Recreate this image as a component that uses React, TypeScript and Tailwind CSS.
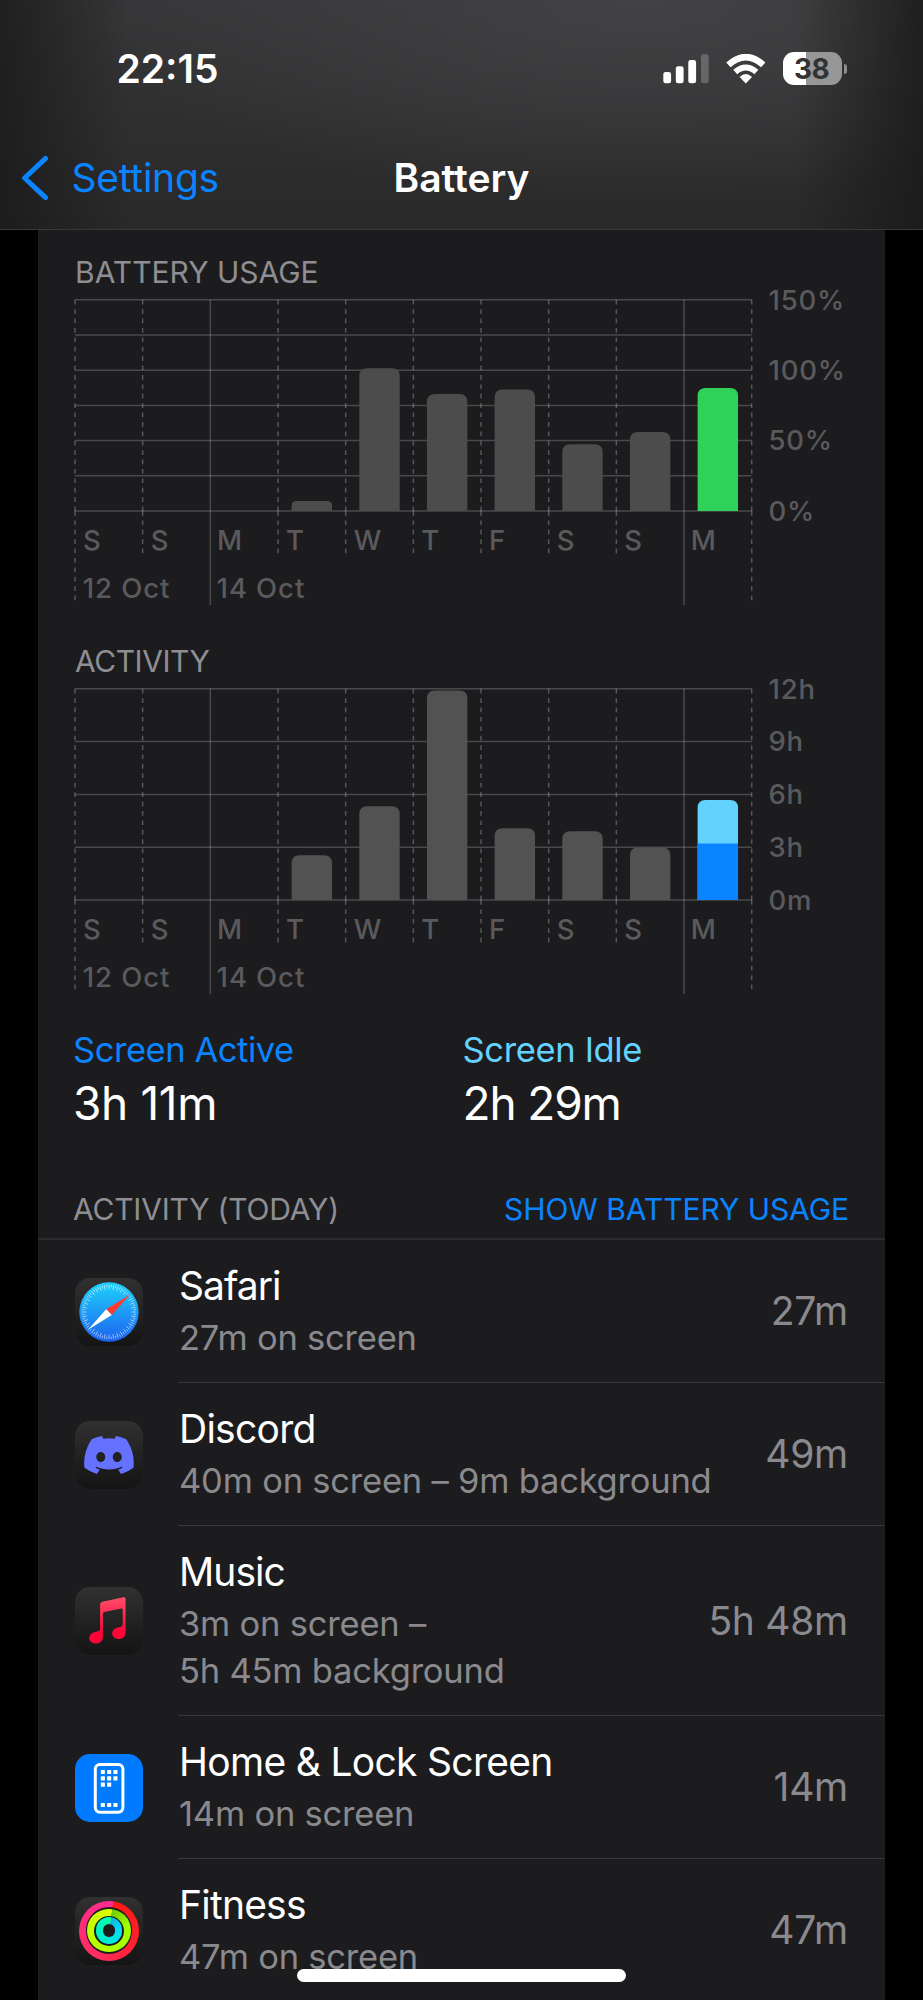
import type { ReactNode } from "react";
import { FaDiscord } from "react-icons/fa";

type Bar = { column: number; height: number; split?: number; fill: string };

type ChartProps = {
  rows: number;
  labels: string[];
  bars: Bar[];
  className: string;
};

type AppUsage = {
  name: string;
  nameClass: string;
  lines: string[];
  total: string;
  icon: ReactNode;
};

const DAYS = ["S", "S", "M", "T", "W", "T", "F", "S", "S", "M"];

const LEFT = 37;
const TOP = 7.8;
const COL = 67.67;
const PLOT_W = COL * 10;
const PLOT_H = 211.2;

const batteryBars: Bar[] = [
  { column: 3, height: 10, fill: "#4c4c4c" },
  { column: 4, height: 142.8, fill: "#4c4c4c" },
  { column: 5, height: 117, fill: "#4c4c4c" },
  { column: 6, height: 121.5, fill: "#4c4c4c" },
  { column: 7, height: 66.8, fill: "#4c4c4c" },
  { column: 8, height: 79, fill: "#4c4c4c" },
  { column: 9, height: 123, fill: "#30d158" },
];

const activityBars: Bar[] = [
  { column: 3, height: 44.7, fill: "#525252" },
  { column: 4, height: 93.7, fill: "#525252" },
  { column: 5, height: 209.5, fill: "#525252" },
  { column: 6, height: 71.7, fill: "#525252" },
  { column: 7, height: 68.7, fill: "#525252" },
  { column: 8, height: 52.5, fill: "#525252" },
  { column: 9, height: 100, split: 56.5, fill: "#64d2ff" },
];

function barPath(x: number, height: number) {
  const w = 40.4;
  const bottom = TOP + PLOT_H;
  const y = bottom - height;
  const r = Math.min(8, height / 2);
  return `M${x} ${bottom}V${y + r}Q${x} ${y} ${x + r} ${y}H${x + w - r}Q${x + w} ${y} ${x + w} ${y + r}V${bottom}Z`;
}

function Chart({ rows, labels, bars, className }: ChartProps) {
  const labelStep = PLOT_H / (labels.length - 1);
  const bottom = TOP + PLOT_H;

  return (
    <svg
      width="847"
      className={`block overflow-visible text-[27.5px] font-medium ${className}`}
      fill="#5a5a5d"
    >
      {Array.from({ length: rows + 1 }, (_, i) => {
        const y = TOP + (PLOT_H / rows) * i;
        return (
          <line key={i} x1={LEFT} x2={LEFT + PLOT_W} y1={y} y2={y} stroke="#fff" strokeOpacity="0.2" strokeWidth="1.5" />
        );
      })}
      {Array.from({ length: 11 }, (_, i) => {
        const x = LEFT + COL * i;
        const solid = i === 2 || i === 9;
        const end = solid ? 313 : i === 0 || i === 10 ? 309 : 262;
        // the dash pattern restarts at the baseline
        return (
          <path
            key={i}
            d={solid ? `M${x} ${TOP}V${end}` : `M${x} ${TOP}V${bottom}M${x} ${bottom}V${end}`}
            fill="none"
            stroke="#fff"
            strokeOpacity={solid ? 0.2 : 0.26}
            strokeWidth="1.5"
            strokeDasharray={solid ? undefined : "4.7 4.7"}
          />
        );
      })}
      {bars.map((bar) => {
        const x = LEFT + COL * bar.column + 13.6;
        return (
          <g key={bar.column}>
            <path d={barPath(x, bar.height)} fill={bar.fill} />
            {bar.split && (
              <rect x={x} y={bottom - bar.split} width="40.4" height={bar.split} fill="#0a84ff" />
            )}
          </g>
        );
      })}
      {DAYS.map((day, i) => (
        <text key={i} x={LEFT + COL * i + (day === "M" ? 6.6 : 8)} y="258">
          {day}
        </text>
      ))}
      <text x="44.8" y="305.8" className="tracking-[0.033em]">12 Oct</text>
      <text x="178.6" y="305.8" className="tracking-[0.033em]">14 Oct</text>
      {labels.map((label, i) => (
        <text key={label} x="730.4" y={TOP + labelStep * i + 9.8} className="tracking-[0.03em]">
          {label}
        </text>
      ))}
    </svg>
  );
}

function DarkTile({ children }: { children: ReactNode }) {
  return (
    <div className="flex size-[68px] items-center justify-center rounded-[15px] bg-linear-to-b from-[#313131] to-[#141414]">
      {children}
    </div>
  );
}

function SafariIcon() {
  return (
    <DarkTile>
      <svg viewBox="0 0 60 60" className="size-[60px]">
        <defs>
          <linearGradient id="safari" x1="0" y1="0" x2="0" y2="1">
            <stop offset="0" stopColor="#1fd2fb" />
            <stop offset="1" stopColor="#1c62f0" />
          </linearGradient>
        </defs>
        <circle cx="30" cy="30" r="29.7" fill="url(#safari)" />
        {Array.from({ length: 72 }, (_, i) => (
          <line
            key={i}
            x1="30"
            x2="30"
            y1="2.8"
            y2={i % 2 ? 5.4 : 7.6}
            stroke="#fff"
            strokeOpacity="0.75"
            strokeWidth="0.7"
            transform={`rotate(${i * 5} 30 30)`}
          />
        ))}
        <path d="M51 12.5L27.2 27.2L32.8 33Z" fill="#ff3b30" />
        <path d="M9 47.7L27.2 27.2L32.8 33Z" fill="#fff" />
      </svg>
    </DarkTile>
  );
}

function MusicIcon() {
  return (
    <DarkTile>
      <svg viewBox="0 0 68 68" className="size-[68px]">
        <defs>
          <linearGradient id="music" x1="0" y1="0" x2="0" y2="1">
            <stop offset="0" stopColor="#ff4e6b" />
            <stop offset="0.75" stopColor="#ff0436" />
          </linearGradient>
        </defs>
        <path
          d="M27.5 14.7L48.5 10.2Q50.6 9.8 50.6 11.8V45.2C50.6 49.5 47.6 52 43.4 52C39.6 52 37.2 49.7 37.2 46.6C37.2 43.2 39.7 41.1 43.2 40.4L46 39.8Q47.7 39.3 47.7 37.5V22.8Q47.7 21.2 46 21.5L29.4 25Q27.9 25.4 27.9 27V49.5C27.9 53.9 24.9 56.5 20.6 56.5C16.8 56.5 14.3 54.2 14.3 51.1C14.3 47.8 16.8 45.6 20.3 44.9L23.3 44.3Q25.1 43.8 25.1 42V17.5Q25.1 15.2 27.5 14.7Z"
          fill="url(#music)"
        />
      </svg>
    </DarkTile>
  );
}

function HomeIcon() {
  const dots = [
    [0, 0], [1, 0], [2, 0],
    [0, 1], [1, 1], [2, 1],
    [0, 2], [1, 2],
  ];

  return (
    <div className="size-[68px] rounded-[15px] bg-[#007aff]">
      <svg viewBox="0 0 68 68" className="size-[68px]" fill="#fff">
        <rect x="20.3" y="10.4" width="27.6" height="47.8" rx="4.6" fill="none" stroke="#fff" strokeWidth="3" />
        {dots.map(([x, y]) => (
          <rect key={`${x}-${y}`} x={25.8 + x * 6.3} y={16 + y * 6.3} width="4.1" height="4.1" rx="0.5" />
        ))}
        {[0, 1, 2].map((x) => (
          <rect key={x} x={25.8 + x * 6.3} y="49" width="4.1" height="4.1" rx="0.5" />
        ))}
      </svg>
    </div>
  );
}

function FitnessIcon() {
  return (
    <DarkTile>
      <div className="relative size-[60px] rounded-full bg-[conic-gradient(from_8deg,#ff1a12,#ff2030_30%,#ff2d60_55%,#ff2c95)]">
        <div className="absolute inset-[6.7px] rounded-full bg-[#1c1c1c]" />
        <div className="absolute inset-[8.3px] rounded-full bg-[conic-gradient(from_8deg,#6fca00,#a0ff00_18%,#b4ff00_55%,#dcff00)]" />
        <div className="absolute inset-[15px] rounded-full bg-[#1c1c1c]" />
        <div className="absolute inset-[16.6px] rounded-full bg-[conic-gradient(from_10deg,#0bb4d8,#00dcfa_20%,#00eed0_55%,#00ffa6)]" />
        <div className="absolute inset-[23.6px] rounded-full bg-[#1c1c1c]" />
      </div>
    </DarkTile>
  );
}

const apps: AppUsage[] = [
  {
    name: "Safari",
    nameClass: "tracking-[-0.025em]",
    lines: ["27m on screen"],
    total: "27m",
    icon: <SafariIcon />,
  },
  {
    name: "Discord",
    nameClass: "tracking-[-0.019em]",
    lines: ["40m on screen – 9m background"],
    total: "49m",
    icon: (
      <DarkTile>
        <FaDiscord className="size-[54px] text-[#6571ff]" />
      </DarkTile>
    ),
  },
  {
    name: "Music",
    nameClass: "tracking-[-0.024em]",
    lines: ["3m on screen –", "5h 45m background"],
    total: "5h 48m",
    icon: <MusicIcon />,
  },
  {
    name: "Home & Lock Screen",
    nameClass: "tracking-[-0.018em]",
    lines: ["14m on screen"],
    total: "14m",
    icon: <HomeIcon />,
  },
  {
    name: "Fitness",
    nameClass: "tracking-[-0.02em]",
    lines: ["47m on screen"],
    total: "47m",
    icon: <FitnessIcon />,
  },
];

function AppRow({ app }: { app: AppUsage }) {
  return (
    <li className="flex items-center pl-[37px]">
      <div className="mr-[35px] shrink-0">{app.icon}</div>
      <div className="flex flex-1 items-center justify-between border-b border-[#38383a] pt-[21.5px] pr-[37px] pb-[21.5px] pl-px">
        <div>
          <h3 className={`text-[39px] leading-[48px] text-white ${app.nameClass}`}>{app.name}</h3>
          <div className="mt-1 text-[34.5px] leading-[47px] tracking-[-0.006em] text-[#8a8a8e]">
            {app.lines.map((line) => (
              <p key={line} className="whitespace-nowrap">
                {line}
              </p>
            ))}
          </div>
        </div>
        <span className="text-[39px] leading-[48px] tracking-[-0.007em] whitespace-nowrap text-[#8a8a8e]">
          {app.total}
        </span>
      </div>
    </li>
  );
}

function StatusBar() {
  return (
    <div className="flex h-[137px] items-center justify-between pr-[76px] pl-[116.5px]">
      <time className="text-[39px] leading-none font-semibold text-white">22:15</time>
      <div className="flex items-center">
        <svg width="47" height="30" viewBox="0 0 47 30" fill="#fff">
          <rect x="0.3" y="18" width="7.8" height="11.3" rx="2.4" />
          <rect x="12.8" y="12.2" width="7.8" height="17.1" rx="2.4" />
          <rect x="25.3" y="6" width="7.8" height="23.3" rx="2.4" />
          <rect x="37.9" y="0.2" width="7.8" height="29.1" rx="2.4" fillOpacity="0.22" />
        </svg>
        <svg width="40" height="30" viewBox="0 0 40 30" className="ml-4" fill="none" stroke="#fff">
          <path d="M2.4 10.8Q19.8 -4.6 37.2 10.8" strokeWidth="6.4" />
          <path d="M9.2 18.1Q19.8 8.9 30.4 18.1" strokeWidth="6" />
          <path d="M13.6 22.9Q19.8 17.3 26 22.9L19.8 29.5Z" fill="#fff" stroke="none" />
        </svg>
        <div className="ml-[17px] flex h-[33px] w-[59px] items-center justify-center rounded-[11px] bg-linear-to-r from-white from-39% to-[#979797] to-39%">
          <span className="mr-[2px] text-[28px] leading-none font-bold tracking-[-0.02em] text-[#333334]">38</span>
        </div>
        <div className="ml-[2px] h-[10px] w-[3px] rounded-r-full bg-[#8e8e8e]" />
      </div>
    </div>
  );
}

export default function App() {
  return (
    <div className="relative h-[2000px] w-[923px] overflow-hidden bg-black font-['Inter',sans-serif] antialiased">
      <header className="h-[230px] border-b border-[#38393b] bg-[linear-gradient(to_right,rgba(24,24,24,0.75),transparent_14%,transparent_86%,rgba(24,24,24,0.8)),radial-gradient(ellipse_560px_200px_at_640px_0px,#424244,transparent),linear-gradient(to_bottom,#363638,#29292a)]">
        <StatusBar />
        <nav className="grid h-[81px] grid-cols-3 items-center">
          <button className="flex items-center pl-[21px] text-left text-[39px] leading-none tracking-[-0.006em] text-[#0a84ff]">
            <svg width="28" height="46" viewBox="0 0 28 46" className="mr-[22.5px]">
              <path d="M24.6 3.4L3.6 23L24.6 42.6" fill="none" stroke="currentColor" strokeWidth="5" strokeLinecap="round" strokeLinejoin="round" />
            </svg>
            Settings
          </button>
          <h1 className="text-center text-[39px] leading-none font-semibold text-white">Battery</h1>
        </nav>
      </header>

      <main className="mx-auto w-[847px] bg-[#1c1c1e] pt-[22px]">
        <h2 className="pl-[37px] text-[30px] leading-10 text-[#8e8e93]">BATTERY USAGE</h2>
        <Chart rows={6} labels={["150%", "100%", "50%", "0%"]} bars={batteryBars} className="h-[349px]" />

        <h2 className="pl-[37px] text-[30px] leading-10 tracking-[-0.015em] text-[#8e8e93]">ACTIVITY</h2>
        <Chart rows={4} labels={["12h", "9h", "6h", "3h", "0m"]} bars={activityBars} className="h-[346px]" />

        <div className="flex pl-[35px]">
          <div className="w-[389.5px]">
            <p className="text-[34.5px] leading-[46px] tracking-[-0.013em] text-[#0a84ff]">Screen Active</p>
            <p className="mt-0.5 text-[46px] leading-[56px] tracking-[-0.008em] text-white">3h 11m</p>
          </div>
          <div>
            <p className="text-[34.5px] leading-[46px] tracking-[-0.01em] text-[#64d2ff]">Screen Idle</p>
            <p className="mt-0.5 text-[46px] leading-[56px] tracking-[-0.025em] text-white">2h 29m</p>
          </div>
        </div>

        <div className="mt-[58px] flex justify-between border-b-2 border-[#2b2b2d] pr-[36px] pb-[9px] pl-[35px] text-[30px] leading-10">
          <h2 className="tracking-[-0.007em] text-[#8e8e93]">ACTIVITY (TODAY)</h2>
          <button className="tracking-[-0.002em] text-[#0a84ff]">SHOW BATTERY USAGE</button>
        </div>
        <ul>
          {apps.map((app) => (
            <AppRow key={app.name} app={app} />
          ))}
        </ul>
      </main>

      <div className="absolute bottom-[18px] left-[297px] h-[13px] w-[329px] rounded-full bg-white" />
    </div>
  );
}
